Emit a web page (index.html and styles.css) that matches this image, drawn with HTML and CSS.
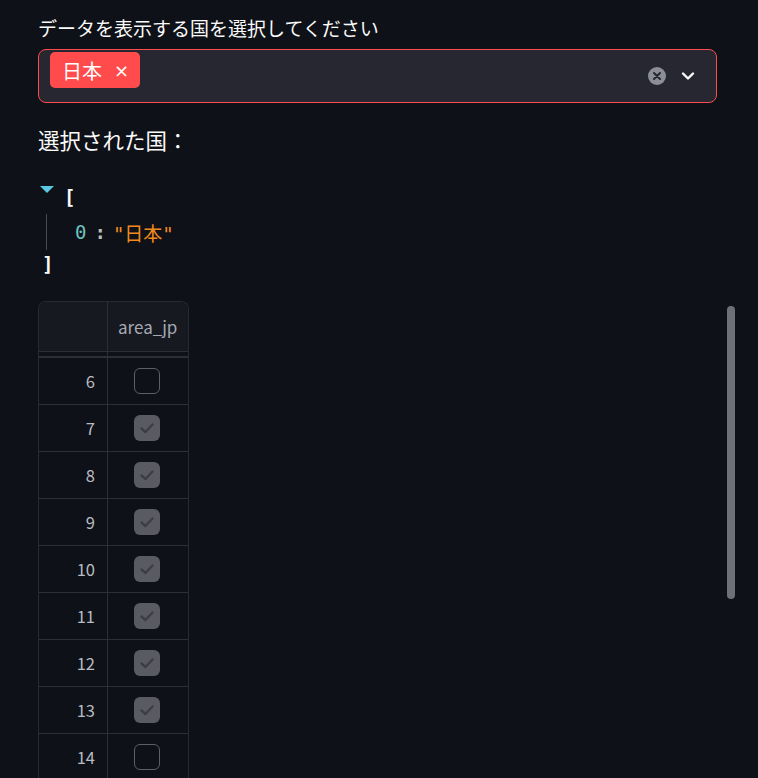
FILE: index.html
```html
<!DOCTYPE html>
<html lang="ja">
<head>
<meta charset="utf-8">
<link rel="stylesheet" href="styles.css">
</head>
<body>
<main class="page">
  <div class="label">データを表示する国を選択してください</div>
  <div class="select">
    <div class="tags">
      <span class="tag">日本<span class="tag-x">×</span></span>
    </div>
    <div class="icons">
      <svg class="clear" width="18" height="18" viewBox="0 0 18 18"><circle cx="9" cy="9" r="9" fill="#8b8d99"/><path d="M6 6 L12 12 M12 6 L6 12" stroke="#262730" stroke-width="2" stroke-linecap="round"/></svg>
      <svg class="chev" width="16" height="16" viewBox="0 0 16 16"><path d="M3 5.5 L8 10.5 L13 5.5" fill="none" stroke="#fafafa" stroke-width="2.4" stroke-linecap="round" stroke-linejoin="round"/></svg>
    </div>
  </div>
  <div class="heading">選択された国：</div>
  <div class="json">
    <div class="jrow open"><svg class="tri" width="14" height="8" viewBox="0 0 14 8"><path d="M0 0 H14 L7 7 Z" fill="#5ac8e0"/></svg><span class="br">[</span></div>
    <div class="jrow item"><span class="key">0</span><span class="colon">:</span><span class="str">"日本"</span></div>
    <div class="jrow close"><span class="br">]</span></div>
  </div>
  <div class="table">
    <div class="thead">
      <div class="cell idx"></div>
      <div class="cell col">area_jp</div>
    </div>
    <div class="gap"><div class="cell idx"></div><div class="cell col"></div></div>
    <div class="tr"><div class="cell idx">6</div><div class="cell col"><span class="cb"></span></div></div>
    <div class="tr"><div class="cell idx">7</div><div class="cell col"><span class="cb on"><svg width="26" height="26" viewBox="0 0 26 26"><path d="M7.5 13.5 L11.5 17 L18.5 9.5" fill="none" stroke="#3c3e45" stroke-width="2.4" stroke-linecap="round" stroke-linejoin="round"/></svg></span></div></div>
    <div class="tr"><div class="cell idx">8</div><div class="cell col"><span class="cb on"><svg width="26" height="26" viewBox="0 0 26 26"><path d="M7.5 13.5 L11.5 17 L18.5 9.5" fill="none" stroke="#3c3e45" stroke-width="2.4" stroke-linecap="round" stroke-linejoin="round"/></svg></span></div></div>
    <div class="tr"><div class="cell idx">9</div><div class="cell col"><span class="cb on"><svg width="26" height="26" viewBox="0 0 26 26"><path d="M7.5 13.5 L11.5 17 L18.5 9.5" fill="none" stroke="#3c3e45" stroke-width="2.4" stroke-linecap="round" stroke-linejoin="round"/></svg></span></div></div>
    <div class="tr"><div class="cell idx">10</div><div class="cell col"><span class="cb on"><svg width="26" height="26" viewBox="0 0 26 26"><path d="M7.5 13.5 L11.5 17 L18.5 9.5" fill="none" stroke="#3c3e45" stroke-width="2.4" stroke-linecap="round" stroke-linejoin="round"/></svg></span></div></div>
    <div class="tr"><div class="cell idx">11</div><div class="cell col"><span class="cb on"><svg width="26" height="26" viewBox="0 0 26 26"><path d="M7.5 13.5 L11.5 17 L18.5 9.5" fill="none" stroke="#3c3e45" stroke-width="2.4" stroke-linecap="round" stroke-linejoin="round"/></svg></span></div></div>
    <div class="tr"><div class="cell idx">12</div><div class="cell col"><span class="cb on"><svg width="26" height="26" viewBox="0 0 26 26"><path d="M7.5 13.5 L11.5 17 L18.5 9.5" fill="none" stroke="#3c3e45" stroke-width="2.4" stroke-linecap="round" stroke-linejoin="round"/></svg></span></div></div>
    <div class="tr"><div class="cell idx">13</div><div class="cell col"><span class="cb on"><svg width="26" height="26" viewBox="0 0 26 26"><path d="M7.5 13.5 L11.5 17 L18.5 9.5" fill="none" stroke="#3c3e45" stroke-width="2.4" stroke-linecap="round" stroke-linejoin="round"/></svg></span></div></div>
    <div class="tr"><div class="cell idx">14</div><div class="cell col"><span class="cb"></span></div></div>
  </div>
</main>
<div class="scrollbar"></div>
</body>
</html>
```
FILE: styles.css
```css
html, body {
  margin: 0;
  height: 100%;
  overflow: hidden;
  background: #0e1117;
}
body {
  font-family: "Noto Sans CJK JP", "Noto Sans", sans-serif;
  color: #fafafa;
}
.page {
  padding: 14px 41px 0 38px;
}
.label {
  font-size: 19px;
  line-height: 28px;
  height: 28px;
  margin-bottom: 7px;
  white-space: nowrap;
}
.select {
  box-sizing: border-box;
  height: 54px;
  border: 1px solid #ff4b4b;
  border-radius: 8px;
  background: #262730;
  display: flex;
  align-items: flex-start;
  justify-content: space-between;
  padding: 2px 20px 0 11px;
}
.tags {
  display: flex;
}
.tag {
  display: flex;
  align-items: center;
  height: 36px;
  box-sizing: border-box;
  padding: 0 11px 0 12px;
  background: #ff4b4b;
  border-radius: 5px;
  font-size: 20px;
  color: #fff;
}
.tag-x {
  font-size: 18px;
  margin-left: 12px;
  font-family: "DejaVu Sans", sans-serif;
}
.icons {
  align-self: center;
  display: flex;
  align-items: center;
  gap: 14px;
  margin-top: -2px;
}
.clear, .chev {
  display: block;
}
.heading {
  font-size: 21.5px;
  line-height: 30px;
  margin-top: 22px;
  white-space: nowrap;
}
.json {
  margin-top: 25px;
  font-family: "DejaVu Sans Mono", "Noto Sans CJK JP", monospace;
  font-size: 19px;
  font-weight: bold;
}
.jrow {
  height: 34px;
  display: flex;
  align-items: center;
}
.jrow.open {
  padding-left: 2px;
}
.tri {
  margin-right: 10px;
  margin-top: -15px;
}
.br {
  color: #fafafa;
}
.jrow.item {
  margin-left: 8px;
  border-left: 1px solid #4a4c52;
  padding-left: 28px;
  height: 36px;
  font-weight: normal;
}
.key {
  color: #6cc3c0;
}
.colon {
  color: #bdbdbd;
  font-weight: bold;
  margin: 0 7px 0 8px;
}
.str {
  color: #f28b1e;
}
.jrow.close {
  padding-left: 4px;
  margin-top: -3px;
}
.table {
  margin-top: 20px;
  width: 151px;
  box-sizing: border-box;
  border: 1px solid #272a31;
  border-bottom: none;
  border-radius: 8px 8px 0 0;
  overflow: hidden;
}
.thead, .tr, .gap {
  display: grid;
  grid-template-columns: 69px 1fr;
}
.thead {
  height: 49px;
  background: #161920;
  border-bottom: 1px solid #2c2f36;
}
.gap {
  height: 4px;
  border-bottom: 2px solid #2c2f36;
}
.tr {
  height: 46px;
  border-bottom: 1px solid #2c2f36;
}
.cell {
  display: flex;
  align-items: center;
}
.idx {
  border-right: 1px solid #2c2f36;
  justify-content: flex-end;
  padding-right: 12px;
  font-size: 16.5px;
  color: #b9bcc3;
}
.thead .col {
  padding-left: 10px;
  font-size: 17px;
  color: #a6a9b3;
}
.tr .col {
  justify-content: center;
}
.cb {
  width: 26px;
  height: 26px;
  box-sizing: border-box;
  border: 1.5px solid #5c5f66;
  border-radius: 6px;
  margin-left: -2px;
}
.cb.on {
  border: none;
  background: #595b61;
}
.cb svg {
  display: block;
}
.scrollbar {
  position: fixed;
  left: 727px;
  top: 306px;
  width: 8px;
  height: 293px;
  border-radius: 4px;
  background: #6e7075;
}
```
